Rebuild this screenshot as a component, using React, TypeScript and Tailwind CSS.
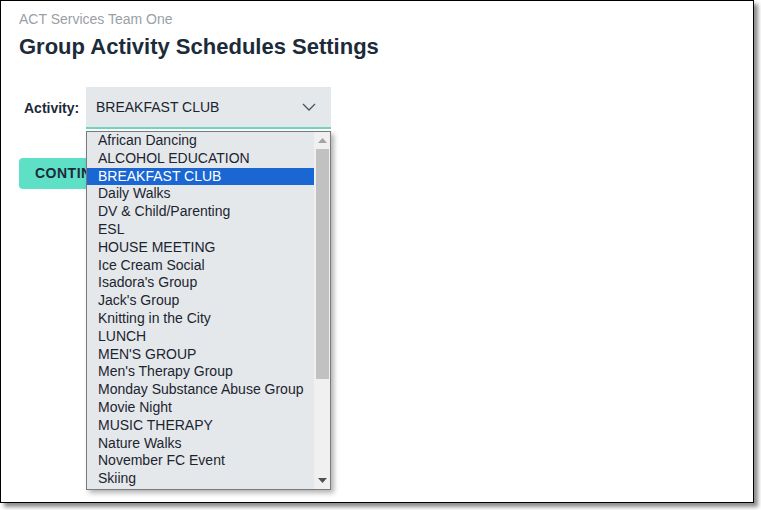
import React from "react";

const items = [
  "African Dancing",
  "ALCOHOL EDUCATION",
  "BREAKFAST CLUB",
  "Daily Walks",
  "DV & Child/Parenting",
  "ESL",
  "HOUSE MEETING",
  "Ice Cream Social",
  "Isadora's Group",
  "Jack's Group",
  "Knitting in the City",
  "LUNCH",
  "MEN'S GROUP",
  "Men's Therapy Group",
  "Monday Substance Abuse Group",
  "Movie Night",
  "MUSIC THERAPY",
  "Nature Walks",
  "November FC Event",
  "Skiing",
];

export default function App() {
  return (
    <div className="w-[761px] h-[510px] bg-white relative" style={{ fontFamily: '"Liberation Sans", Arial, sans-serif' }}>
      <div className="w-[754px] h-[503px] border border-black bg-white shadow-[4px_4px_4px_rgba(0,0,0,0.45)] relative">
        <div className="pl-[18px] pt-[10px]">
          <div className="text-[14px] leading-[16px] text-[#9aa0a6]">ACT Services Team One</div>
          <h1 className="mt-[7px] text-[22px] leading-[26px] font-bold text-[#1c2b39]">Group Activity Schedules Settings</h1>
          <div className="mt-[27px] flex items-center">
            <span className="ml-[5px] w-[62px] text-[14px] font-bold text-[#1c2b39]">Activity:</span>
            <div className="w-[245px] h-[42px] bg-[#e4e8eb] border-b-[2px] border-[#6fd5c0] flex items-center justify-between pl-[10px] pr-[15px]">
              <span className="text-[14px] text-[#1c2430]">BREAKFAST CLUB</span>
              <svg width="14" height="8" viewBox="0 0 14 8" fill="none" stroke="#4a5560" strokeWidth="1.3">
                <path d="M1 1 L7 7 L13 1" />
              </svg>
            </div>
          </div>
          <button className="mt-[29px] h-[31px] px-[16px] rounded-[4px] bg-[#5de0c6] text-[14px] font-bold tracking-[0.5px] text-[#1c2b39]">
            CONTINUE
          </button>
        </div>

        <div className="absolute left-[85px] top-[130px] w-[245px] h-[359px] border border-[#7a7a7a] bg-[#e4e8eb] flex shadow-[3px_3px_5px_rgba(0,0,0,0.3)] overflow-hidden">
          <div className="flex-1">
            {items.map((it) => (
              <div
                key={it}
                className={
                  "h-[17.8px] leading-[17.8px] pl-[11px] text-[14px] whitespace-nowrap " +
                  (it === "BREAKFAST CLUB" ? "bg-[#1a66d2] text-white" : "text-[#1c2430]")
                }
              >
                {it}
              </div>
            ))}
          </div>
          <div className="w-[16px] bg-[#f0f0f0] flex flex-col items-center">
            <div className="h-[17px] flex items-center justify-center">
              <svg width="9" height="5" viewBox="0 0 9 5"><path d="M0 5 L4.5 0 L9 5 Z" fill="#a3a3a3" /></svg>
            </div>
            <div className="w-[13px] h-[230px] bg-[#c1c1c1]" />
            <div className="flex-1" />
            <div className="h-[17px] flex items-center justify-center">
              <svg width="9" height="5" viewBox="0 0 9 5"><path d="M0 0 L9 0 L4.5 5 Z" fill="#505050" /></svg>
            </div>
          </div>
        </div>
      </div>
    </div>
  );
}
